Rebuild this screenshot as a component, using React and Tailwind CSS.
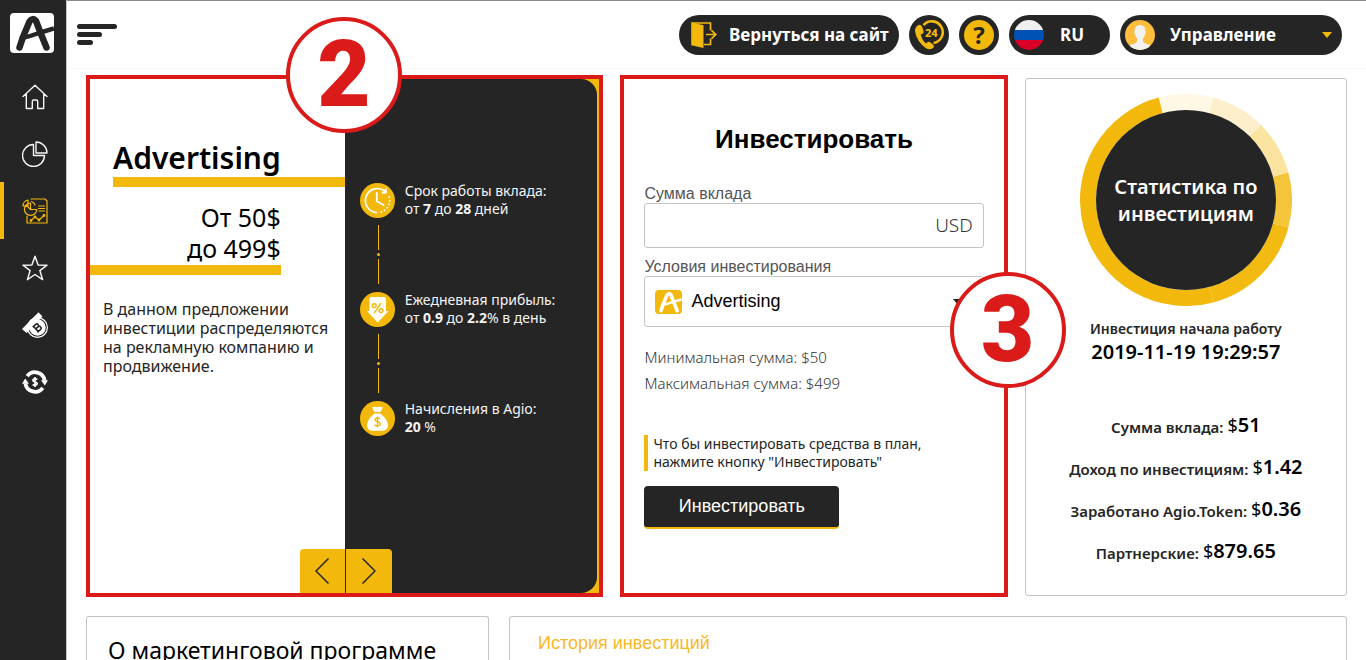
const yellow = "#f2b90c";

function LogoMark({ className, stroke, width }) {
  return (
    <svg viewBox="0 0 44 40" className={className} aria-hidden="true" fill="none" stroke={stroke} strokeWidth={width} strokeLinecap="round" strokeLinejoin="round">
      <path d="M9.5 34.5 L13 24 L19.5 8.5 Q22.5 4 26 8 L31 21 L36.5 34.5" />
      <path d="M10 25.5 Q20 23.5 29 20 L44 15.5" strokeWidth={width - 2} strokeLinecap="butt" />
    </svg>
  );
}

function HomeIcon() {
  return (
    <svg viewBox="0 0 26 26" className="size-[26px]" fill="none" stroke="#f4f4f4" strokeWidth="1.4" strokeLinejoin="round" strokeLinecap="round" aria-hidden="true">
      <path d="M1 12.5 L13 1.2 L25 12.5 M4.3 10 V24.5 H10.3 V17.5 Q10.3 16 11.5 16 H14.5 Q15.7 16 15.7 17.5 V24.5 H21.7 V10" />
    </svg>
  );
}

function PieIcon() {
  return (
    <svg viewBox="0 0 26 26" className="size-[26px]" fill="none" stroke="#f4f4f4" strokeWidth="1.4" strokeLinejoin="round" aria-hidden="true">
      <path d="M11.5 3.5 A11 11 0 1 0 22.5 14.5 H11.5 Z" />
      <path d="M14 1 A11 11 0 0 1 25 12 H14 Z" />
    </svg>
  );
}

function ReportIcon() {
  return (
    <svg viewBox="0 0 26 26" className="size-[26px]" fill="none" stroke={yellow} strokeWidth="1.2" strokeLinejoin="round" strokeLinecap="round" aria-hidden="true">
      <path d="M5 18 V25 H25 V3 L23 1 H9" />
      <path d="M8.5 5 A6.2 6.2 0 1 0 14.8 11.5 H8.5 Z M8.5 11.5 L4 7" />
      <path d="M6 2 A6 6 0 0 0 1 8 H6 Z" />
      <path d="M9.5 3.5 A5.5 5.5 0 0 1 13 7" />
      <path d="M16.5 8 H22.5 M16.5 10.5 H22.5 M17 13 H22.5" />
      <path d="M9 22.5 L13 19 L17 22 L22 17.5" />
      <circle cx="9" cy="22.5" r="0.8" />
      <circle cx="13" cy="18.8" r="0.8" />
      <circle cx="17" cy="22" r="0.8" />
      <circle cx="22" cy="17.5" r="0.8" />
    </svg>
  );
}

function StarIcon() {
  return (
    <svg viewBox="0 0 26 26" className="size-[26px]" fill="none" stroke="#f4f4f4" strokeWidth="1.5" strokeLinejoin="round" aria-hidden="true">
      <path d="M13 1.2 L16.1 10 L25 10.2 L17.9 15.6 L20.6 24.6 L13 19.5 L5.4 24.6 L8.1 15.6 L1 10.2 L9.9 10 Z" />
    </svg>
  );
}

function CoinSlotIcon() {
  return (
    <svg viewBox="0 0 26 26" className="size-[26px]" aria-hidden="true">
      <circle cx="15.5" cy="15.5" r="9.9" fill="#252525" stroke="#fff" strokeWidth="1.2" />
      <circle cx="15.5" cy="15.5" r="8.2" fill="#fff" />
      <path d="M0 17 L16.5 0.3 L20.5 4.6 L4.6 21 Z" fill="#fff" />
      <g transform="rotate(-42 15.5 15.5)" fill="none" stroke="#252525" strokeWidth="1.6">
        <path d="M13.3 11.8 V19.2 M12.2 12 H16.2 A1.7 1.7 0 0 1 16.2 15.4 H13.3 M16.4 15.4 A1.8 1.8 0 0 1 16.4 19 H12.2" />
      </g>
    </svg>
  );
}

function ExchangeIcon() {
  return (
    <svg viewBox="0 0 26 26" className="size-[26px]" fill="none" stroke="#fff" aria-hidden="true">
      <path d="M5.2 7.2 A9.7 9.7 0 0 1 22.6 11.5" strokeWidth="3.8" />
      <path d="M20.8 18.8 A9.7 9.7 0 0 1 3.4 14.5" strokeWidth="3.8" />
      <path d="M19 11.2 H26 L22.8 16.6 Z M7 14.8 H0 L3.2 9.4 Z" fill="#fff" stroke="none" />
      <path d="M15.4 10.6 Q13 9.2 11.2 10.4 Q10.2 12.4 13 13 Q16 13.6 14.8 15.6 Q13 16.8 10.6 15.4 M13 8 V18" strokeWidth="1.7" />
    </svg>
  );
}

function DoorIcon() {
  return (
    <svg viewBox="0 0 26 26" className="size-[26px] shrink-0" aria-hidden="true" fill="none" stroke={yellow} strokeWidth="1.7">
      <path d="M1 1 H19.5 V8.5 M19.5 16.5 V22.5 H13" />
      <path d="M0.2 0.2 L12.5 3.2 V26 L0.2 23.3 Z" fill={yellow} stroke="none" />
      <path d="M15 12.5 H24.5 M20.5 8.3 L24.8 12.5 L20.5 16.7" />
    </svg>
  );
}

function PhoneIcon() {
  return (
    <svg viewBox="0 0 32 32" className="size-8" aria-hidden="true">
      <path d="M5 6.2 Q1.6 8.6 2 12 Q3.5 22.5 13 29.2 Q17 31.8 20.5 28.4 Q21.6 27 20.3 25.8 L16.8 23 Q15.4 22.2 14.2 23.4 L12.8 24.6 Q9 21 7.6 15.8 L9.6 14.8 Q11 14 10.6 12.5 L9 7.6 Q7.6 4.8 5 6.2 Z" fill={yellow} />
      <path d="M10.5 6.2 A10.9 10.9 0 1 1 20.5 24" fill="none" stroke={yellow} strokeWidth="2.6" />
      <text x="12" y="18" fill={yellow} fontFamily="Noto Sans, sans-serif" fontWeight="800" fontSize="11">24</text>
    </svg>
  );
}

function AvatarIcon() {
  return (
    <svg viewBox="0 0 30 30" className="size-[30px] shrink-0" aria-hidden="true">
      <defs>
        <clipPath id="avatar-clip">
          <circle cx="15" cy="15" r="15" />
        </clipPath>
      </defs>
      <g clipPath="url(#avatar-clip)">
        <rect width="30" height="30" fill="#ffbd3e" />
        <path d="M15 5 Q20.5 5 20.5 11 Q21.3 12.5 20 14.5 Q19.5 17 18 18.5 V21.5 Q19 23.5 24 24.5 Q26 25.5 26.5 30 H3.5 Q4 25.5 6 24.5 Q11 23.5 12 21.5 V18.5 Q10.5 17 10 14.5 Q8.7 12.5 9.5 11 Q9.5 5 15 5 Z" fill="#f4f1ee" />
      </g>
    </svg>
  );
}

function FlagIcon() {
  return (
    <span className="flex size-[30px] shrink-0 flex-col overflow-hidden rounded-full" aria-hidden="true">
      <span className="flex-1 bg-[#f0f0f0]" />
      <span className="flex-1 bg-[#0052b4]" />
      <span className="flex-1 bg-[#d80027]" />
    </span>
  );
}

function ClockIcon() {
  return (
    <svg viewBox="0 0 35 35" className="size-[35px] shrink-0" aria-hidden="true" fill="none" stroke="#fff" strokeLinecap="round">
      <circle cx="17.5" cy="17.5" r="17.5" fill={yellow} stroke="none" />
      <path d="M16.5 29.5 A12 12 0 1 1 25 8.2" strokeWidth="1.7" />
      <path d="M26.5 5.5 V10.2 H21.8 Z" fill="#fff" strokeWidth="0.6" />
      <path d="M29.2 14 A12 12 0 0 1 18 29.5" strokeWidth="1.9" strokeDasharray="0.1 3.6" />
      <path d="M16.8 9.8 V18.3 L23.6 22" strokeWidth="1.8" />
    </svg>
  );
}

function PercentIcon() {
  return (
    <svg viewBox="0 0 35 35" className="size-[35px] shrink-0" aria-hidden="true">
      <circle cx="17.5" cy="17.5" r="17.5" fill={yellow} />
      <path d="M9.5 7 Q9.5 5 11.5 5 H24 Q26 5 26 7 V19 H28.5 L17.7 30.5 L7 19 H9.5 Z" fill="#fff" />
      <g fill="none" stroke={yellow} strokeWidth="1.4">
        <circle cx="14.2" cy="13.6" r="1.9" />
        <circle cx="21" cy="18.6" r="1.9" />
        <path d="M21 11 L14.2 21.2" />
      </g>
    </svg>
  );
}

function MoneyBagIcon() {
  return (
    <svg viewBox="0 0 35 35" className="size-[35px] shrink-0" aria-hidden="true">
      <circle cx="17.5" cy="17.5" r="17.5" fill={yellow} />
      <path d="M12 6.5 Q14 5 17 6.2 Q20 5 23 6.5 L20.3 11 H14.5 Z" fill="#fff" />
      <path d="M14.5 12.5 H20.3 Q28 18.5 28 25 Q27.5 29.8 22 29.8 H13 Q7.5 29.8 7 25 Q7 18.5 14.5 12.5 Z" fill="#fff" />
      <path d="M20.2 18 Q17.5 16.2 15.3 17.8 Q14 20 17.5 20.8 Q21.5 21.8 19.9 24 Q17.5 25.8 14.5 23.8 M17.5 15.4 V26.4" fill="none" stroke={yellow} strokeWidth="1.4" />
    </svg>
  );
}

const ring = [
  [-15, 15, "#fef8e5"],
  [15, 45, "#fdefcb"],
  [45, 75, "#fbe3a0"],
  [75, 105, "#f4c53a"],
  [105, 165, "#f3bb12"],
  [165, 345, yellow],
];

function arc(from, to) {
  const at = (deg) => {
    const a = ((deg - 90) * Math.PI) / 180;
    return `${106 + 98 * Math.cos(a)} ${106 + 98 * Math.sin(a)}`;
  };
  return `M${at(from)} A98 98 0 ${to - from > 180 ? 1 : 0} 1 ${at(to)}`;
}

function Connector() {
  return (
    <div className="flex w-[37px] flex-col items-center gap-[3px] py-[7px]" aria-hidden="true">
      <span className="h-[25px] w-px bg-[#f2b90c]" />
      <span className="size-[3px] rounded-full bg-[#f2b90c]" />
      <span className="h-[25px] w-px bg-[#f2b90c]" />
    </div>
  );
}

function Feature({ icon, title, children }) {
  return (
    <div className="flex items-center gap-[10px]">
      {icon}
      <p className="text-[14px] leading-[18px] whitespace-nowrap text-[#f4f4f4]">
        {title}
        <br />
        {children}
      </p>
    </div>
  );
}

function StepBadge({ children, className }) {
  return (
    <div className={"absolute z-10 flex size-[116px] items-center justify-center rounded-full border-4 border-[#db1a1a] bg-white font-['Impact','Roboto',sans-serif] text-[92px] leading-none font-black text-[#db1a1a] " + className}>
      {children}
    </div>
  );
}

const navItems = [
  ["Главная", HomeIcon],
  ["Статистика", PieIcon],
  ["Инвестиции", ReportIcon],
  ["Избранное", StarIcon],
  ["Пополнить", CoinSlotIcon],
  ["Обмен", ExchangeIcon],
];

const stats = [
  ["Сумма вклада:", "51"],
  ["Доход по инвестициям:", "1.42"],
  ["Заработано Agio.Token:", "0.36"],
  ["Партнерские:", "879.65"],
];

function Sidebar() {
  return (
    <aside className="flex w-[66px] shrink-0 flex-col bg-[#252525]">
      <a href="#home" aria-label="Agio" className="mt-[13px] ml-[10px] flex h-10 w-11 rounded bg-white">
        <LogoMark className="h-10 w-11" stroke="#252525" width={6.5} />
      </a>
      <nav className="mt-[15px] flex flex-col">
        {navItems.map(([label, Icon], i) => (
          <a
            key={label}
            href={"#" + i}
            aria-label={label}
            className={"flex h-[57px] items-center justify-center border-l-4 " + (i === 2 ? "border-[#f2b90c]" : "border-transparent")}
          >
            <Icon />
          </a>
        ))}
      </nav>
    </aside>
  );
}

function Header() {
  return (
    <header className="flex h-[69px] items-center justify-between border-t border-b border-t-[#8a8a8a] border-b-[#f7f7f7] pr-6 pl-[10px]">
      <button type="button" aria-label="Меню" className="flex flex-col gap-[3px]">
        <span className="h-[5px] w-10 rounded-full bg-[#252525]" />
        <span className="h-[5px] w-[25px] rounded-full bg-[#252525]" />
        <span className="h-[5px] w-4 rounded-full bg-[#252525]" />
      </button>
      <div className="flex items-center gap-[10px] text-[17px] font-bold text-white">
        <a href="#site" className="flex h-10 w-[220px] items-center gap-3 rounded-full bg-[#252525] pl-3 whitespace-nowrap">
          <DoorIcon />
          Вернуться на сайт
        </a>
        <button type="button" aria-label="Поддержка 24" className="flex size-10 items-center justify-center rounded-full bg-[#252525]">
          <PhoneIcon />
        </button>
        <button type="button" aria-label="Помощь" className="flex size-10 items-center justify-center rounded-full bg-[#252525]">
          <span className="flex size-[30px] items-center justify-center rounded-full bg-[#f2b90c] text-2xl leading-none text-[#252525]">?</span>
        </button>
        <button type="button" className="flex h-10 w-[101px] items-center gap-4 rounded-full bg-[#252525] pl-[5px]">
          <FlagIcon />
          RU
        </button>
        <button type="button" className="flex h-10 w-[222px] items-center gap-[15px] rounded-full bg-[#252525] pr-[10px] pl-[5px]">
          <AvatarIcon />
          Управление
          <svg viewBox="0 0 10 6" className="ml-auto h-[6px] w-[10px]" aria-hidden="true">
            <path d="M0 0 H10 L5 6 Z" fill={yellow} />
          </svg>
        </button>
      </div>
    </header>
  );
}

function PlanCard() {
  return (
    <section className="relative flex h-[522px] border-4 border-[#db1a1a] bg-[#f2b90c]">
      <StepBadge className="-top-[62px] left-[196px]">2</StepBadge>
      <div className="w-1/2 bg-white pt-[60px]">
        <div className="ml-[23px] border-b-10 border-[#f2b90c]">
          <h1 className="text-[30px] leading-[38px] font-semibold text-black">Advertising</h1>
        </div>
        <p className="mr-16 border-b-10 border-[#f2b90c] pt-[15px] pb-px text-right text-[25px] leading-[31px] text-black">
          От 50$
          <br />
          до 499$
        </p>
        <p className="mt-[25px] pl-[13px] text-[16px] leading-[19px] whitespace-nowrap text-[#252525]">
          В данном предложении
          <br />
          инвестиции распределяются
          <br />
          на рекламную компанию и
          <br />
          продвижение.
        </p>
      </div>
      <div className="mr-[2px] flex-1 rounded-r-2xl bg-[#252525] pt-[103px] pl-[15px]">
        <Feature icon={<ClockIcon />} title="Срок работы вклада:">
          от <b>7</b> до <b>28</b> дней
        </Feature>
        <Connector />
        <Feature icon={<PercentIcon />} title="Ежедневная прибыль:">
          от <b>0.9</b> до <b>2.2</b>% в день
        </Feature>
        <Connector />
        <Feature icon={<MoneyBagIcon />} title="Начисления в Agio:">
          <b>20</b> %
        </Feature>
      </div>
      <div className="absolute inset-x-0 bottom-0 flex justify-center pl-[2px]">
        {["Назад", "Вперёд"].map((label, i) => (
          <button key={label} type="button" aria-label={label} className={"flex h-11 w-[46px] items-center justify-center bg-[#f2b90c] " + (i ? "rounded-tr" : "rounded-tl border-r border-[#252525]")}>
            <svg viewBox="0 0 14 26" className="h-[26px] w-[14px]" fill="none" stroke="#252525" strokeWidth="1.5" aria-hidden="true">
              <path d={i ? "M0.5 0.5 L13 13 L0.5 25.5" : "M13.5 0.5 L1 13 L13.5 25.5"} />
            </svg>
          </button>
        ))}
      </div>
    </section>
  );
}

function InvestCard() {
  return (
    <section className="relative h-[522px] border-4 border-[#db1a1a] bg-white px-5 pt-[42px] font-['Liberation_Sans',sans-serif]">
      <StepBadge className="top-[193px] -right-[62px]">3</StepBadge>
      <form onSubmit={(e) => e.preventDefault()}>
        <h2 className="text-center text-[26px] leading-9 font-bold text-black">Инвестировать</h2>
        <label htmlFor="amount" className="mt-[27px] block text-[16px] leading-[19px] text-[#555]">
          Сумма вклада
        </label>
        <div className="flex h-[45px] items-center rounded-[3px] border border-[#c4c4c4] px-[10px]">
          <input id="amount" className="h-full min-w-0 flex-1 outline-none" />
          <span className="font-['Noto_Sans',sans-serif] text-[19px] font-light text-[#333]">USD</span>
        </div>
        <label htmlFor="plan" className="mt-[9px] block text-[16px] leading-[19px] text-[#555]">
          Условия инвестирования
        </label>
        <div className="flex h-[51px] items-center gap-[9px] rounded-[3px] border border-[#c4c4c4] pr-5 pl-[10px]">
          <span className="flex h-6 w-[27px] shrink-0 items-center justify-center rounded bg-[#f2b90c]">
            <LogoMark className="h-6 w-[27px]" stroke="#fff" width={6} />
          </span>
          <select id="plan" className="h-full min-w-0 flex-1 appearance-none bg-transparent text-[18px] text-black outline-none">
            <option>Advertising</option>
          </select>
          <svg viewBox="0 0 10 6" className="h-[6px] w-[10px]" aria-hidden="true">
            <path d="M0 0 H10 L5 6 Z" fill="#252525" />
          </svg>
        </div>
        <p className="mt-[17px] font-['Noto_Sans',sans-serif] text-[15px] leading-[26px] font-light text-[#333]">
          Минимальная сумма: $50
          <br />
          Максимальная сумма: $499
        </p>
        <p className="mt-[39px] border-l-4 border-[#f2b90c] pl-[5px] font-['Noto_Sans',sans-serif] text-[14px] leading-[18px] whitespace-nowrap text-[#252525]">
          Что бы инвестировать средства в план,
          <br />
          нажмите кнопку "Инвестировать"
        </p>
        <button type="submit" className="mt-[15px] h-[43px] w-[195px] rounded border-b-2 border-[#f2b90c] bg-[#252525] text-[18px] text-white">
          Инвестировать
        </button>
      </form>
    </section>
  );
}

function StatsCard() {
  return (
    <section className="mt-[3px] flex h-[518px] flex-col items-center rounded-[3px] border border-[#c4c4c4] bg-white pt-[15px] text-[#252525]">
      <div className="grid size-[212px] place-items-center">
        <svg viewBox="0 0 212 212" className="col-start-1 row-start-1 size-[212px]" fill="none" strokeWidth="16" aria-hidden="true">
          {ring.map(([from, to, color]) => (
            <path key={from} d={arc(from, to)} stroke={color} />
          ))}
          <circle cx="106" cy="106" r="90" fill="#252525" />
        </svg>
        <h2 className="col-start-1 row-start-1 text-center text-[20px] leading-[27px] font-semibold text-white">
          Статистика по
          <br />
          инвестициям
        </h2>
      </div>
      <p className="mt-[13px] text-[14px] leading-[20px] font-semibold">Инвестиция начала работу</p>
      <p className="text-[20px] leading-[26px] font-semibold text-black">2019-11-19 19:29:57</p>
      <dl className="mt-[39px] flex flex-col items-center">
        {stats.map(([label, value]) => (
          <div key={label} className="flex h-[42px] items-center gap-1 font-semibold whitespace-nowrap">
            <dt className="pt-1 text-[15px]">{label}</dt>
            <dd className="text-[20px] text-black">
              <span className="text-[18px] font-normal">$</span>
              {value}
            </dd>
          </div>
        ))}
      </dl>
    </section>
  );
}

export default function App() {
  return (
    <div className="flex min-h-screen bg-white font-['Noto_Sans',sans-serif]">
      <Sidebar />
      <div className="flex min-w-0 flex-1 flex-col border-l border-[#c4c4c4]">
        <Header />
        <main className="flex flex-1 flex-col pt-[6px] pr-[19px] pl-[19px]">
          <div className="grid grid-cols-[517fr_387fr_322fr] gap-[17px]">
            <PlanCard />
            <InvestCard />
            <StatsCard />
          </div>
          <div className="mt-[19px] grid flex-1 grid-cols-[403fr_838fr] gap-5">
            <section className="rounded-t-[3px] border border-b-0 border-[#c4c4c4] pl-[21px]">
              <h2 className="mt-4 h-[26px] text-[23px] leading-[34px] whitespace-nowrap text-black">О маркетинговой программе</h2>
            </section>
            <section className="rounded-t-[3px] border border-b-0 border-[#c4c4c4] pl-7">
              <h2 className="mt-[15px] h-[22px] font-['Liberation_Sans',sans-serif] text-[18px] leading-[22px] text-[#f9b826]">История инвестиций</h2>
            </section>
          </div>
        </main>
      </div>
    </div>
  );
}
